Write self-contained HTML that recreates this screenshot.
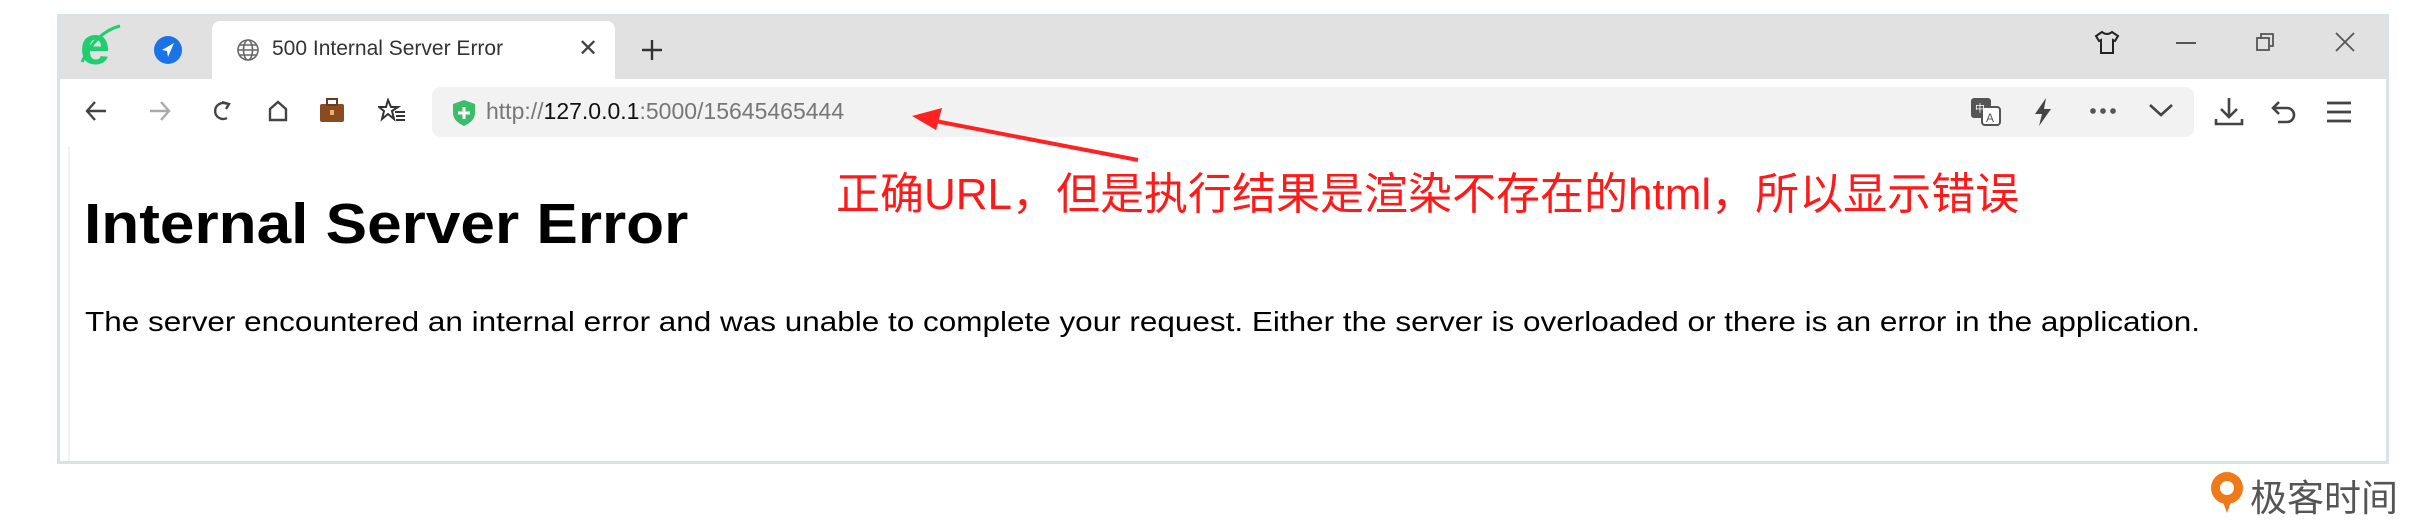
<!DOCTYPE html>
<html><head><meta charset="utf-8"><style>
*{margin:0;padding:0;box-sizing:border-box}
body{width:2428px;height:526px;background:#fff;position:relative;overflow:hidden;font-family:"Liberation Sans","Noto Sans CJK SC",sans-serif}
.abs{position:absolute}
</style></head><body>
<div class="abs" style="left:57px;top:14px;width:2332px;height:450px;border:3px solid #d6e4ea;border-top-width:2px;background:#fff"></div>
<div class="abs" style="left:60px;top:16px;width:2326px;height:63px;background:#e1e1e1"></div>
<div class="abs" style="left:212px;top:21px;width:403px;height:60px;background:#fff;border-radius:8px 8px 0 0"></div>
<div class="abs" style="left:80px;top:20px;font:bold 54px 'Liberation Sans',sans-serif;color:#1fcf6f;line-height:52px">e</div>
<svg class="abs" style="left:76px;top:22px" width="46" height="48"><path d="M6 40 Q20 10 44 4" stroke="#1fcf6f" stroke-width="3" fill="none"/></svg>
<svg class="abs" style="left:153px;top:35px" width="30" height="30"><circle cx="15" cy="15" r="14" fill="#1b73e8"/><path d="M21 8 L9 15 L14 16 L15 22 Z" fill="#fff"/></svg>
<svg class="abs" style="left:236px;top:38px" width="24" height="24" fill="none" stroke="#666" stroke-width="1.6"><circle cx="12" cy="12" r="10"/><ellipse cx="12" cy="12" rx="4.5" ry="10"/><path d="M2 12H22M4 7H20M4 17H20"/></svg>
<div class="abs" style="left:272px;top:37px;font-size:21px;color:#333">500 Internal Server Error</div>
<div class="abs" style="left:578px;top:34px;font-size:24px;color:#444">✕</div>
<svg class="abs" style="left:640px;top:38px" width="24" height="24" stroke="#333" stroke-width="2.4"><path d="M12 2V22M2 12H22"/></svg>
<svg class="abs" style="left:2094px;top:30px" width="26" height="26" fill="none" stroke="#222" stroke-width="2"><path d="M8 2 L2 6 L5 11 L7 10 V23 H19 V10 L21 11 L24 6 L18 2 Q13 6 8 2Z"/></svg>
<div class="abs" style="left:2176px;top:42px;width:20px;height:2px;background:#555"></div>
<svg class="abs" style="left:2255px;top:32px" width="20" height="20" fill="none" stroke="#555" stroke-width="1.8"><rect x="2" y="6" width="12" height="12"/><path d="M6 6V2H18V14H14"/></svg>
<svg class="abs" style="left:2335px;top:32px" width="20" height="20" stroke="#555" stroke-width="1.8"><path d="M1 1L19 19M19 1L1 19"/></svg>
<svg class="abs" style="left:84px;top:98px" width="260" height="26" fill="none" stroke="#444" stroke-width="2.4">
<path d="M22 13H3M11 4L3 13L11 22"/>
<path d="M66 13H85M77 4L85 13L77 22" stroke="#aaa"/>
<path d="M143 6 A8 8 0 1 0 143 20" /><path d="M138 4 L145 6 L142 11" />
<path d="M186 22V11L194 4L202 11V22Z"/>
</svg>
<svg class="abs" style="left:318px;top:96px" width="28" height="28"><rect x="2" y="8" width="24" height="18" rx="2" fill="#8a4a22"/><rect x="9" y="3" width="10" height="6" fill="none" stroke="#6b3a1a" stroke-width="2"/><rect x="12" y="14" width="4" height="5" fill="#e9b36a"/></svg>
<svg class="abs" style="left:378px;top:98px" width="28" height="26" fill="none" stroke="#333" stroke-width="2"><path d="M10 2L13 9L20 9L14 13L16 21L10 16L4 21L6 13L1 9L8 9Z"/><path d="M17 14H27M18 18H27M18 22H27"/></svg>
<div class="abs" style="left:432px;top:87px;width:1762px;height:50px;background:#f2f2f2;border-radius:8px"></div>
<svg class="abs" style="left:452px;top:99px" width="24" height="28"><path d="M12 1 L23 5 V14 Q23 22 12 27 Q1 22 1 14 V5Z" fill="#3dbd6a"/><path d="M12 8V20M6 14H18" stroke="#fff" stroke-width="3"/></svg>
<div class="abs" style="left:486px;top:98px;font-size:23px;color:#777">http://<span style="color:#111">127.0.0.1</span>:5000/15645465444</div>
<svg class="abs" style="left:1970px;top:97px" width="32" height="30"><rect x="1" y="1" width="20" height="20" rx="3" fill="#555"/><rect x="12" y="10" width="18" height="18" rx="3" fill="#fff" stroke="#555" stroke-width="2"/><text x="5" y="15" font-size="10" fill="#fff" font-family="Noto Sans CJK SC">中</text><text x="16" y="25" font-size="12" fill="#555" font-family="Liberation Sans">A</text></svg>
<svg class="abs" style="left:2032px;top:97px" width="22" height="30"><path d="M14 1 L3 17 H10 L7 29 L19 12 H12Z" fill="#444"/></svg>
<div class="abs" style="left:2088px;top:108px;width:30px;height:6px;background:radial-gradient(circle,#555 2.6px,transparent 3px) 0 0/10px 6px"></div>
<svg class="abs" style="left:2148px;top:102px" width="26" height="16" fill="none" stroke="#444" stroke-width="2.6"><path d="M2 3L13 13L24 3"/></svg>
<svg class="abs" style="left:2214px;top:97px" width="30" height="30" fill="none" stroke="#444" stroke-width="2.6"><path d="M15 1V19M7 12L15 20L23 12M2 22V27H28V22"/></svg>
<svg class="abs" style="left:2270px;top:100px" width="28" height="26" fill="none" stroke="#444" stroke-width="2.6"><path d="M9 2L3 8L9 14M3 8H17A7 7 0 0 1 17 22H8"/></svg>
<svg class="abs" style="left:2326px;top:100px" width="26" height="24" stroke="#444" stroke-width="2.8"><path d="M1 3H25M1 12H25M1 21H25"/></svg>
<div class="abs" style="left:68px;top:147px;width:2px;height:314px;background:#eef2f4"></div>
<div class="abs" style="left:84px;top:191px;font-weight:bold;font-size:57px;color:#000;transform:scaleX(1.09);transform-origin:0 0;white-space:nowrap">Internal Server Error</div>
<div class="abs" style="left:85px;top:306px;font-size:28px;color:#000;white-space:nowrap;transform:scaleX(1.124);transform-origin:0 0">The server encountered an internal error and was unable to complete your request. Either the server is overloaded or there is an error in the application.</div>
<div class="abs" style="left:836px;top:158px;font-size:44px;color:#ff1a1a;white-space:nowrap;font-family:'Liberation Sans','Noto Sans CJK SC',sans-serif">正确URL，但是执行结果是渲染不存在的html，所以显示错误</div>
<svg class="abs" style="left:900px;top:100px" width="260" height="70"><path d="M238 60 L30 20" stroke="#f22" stroke-width="4"/><path d="M12 16 L42 8 L36 30Z" fill="#f22"/></svg>
<svg class="abs" style="left:2209px;top:468px" width="36" height="46"><circle cx="18" cy="20" r="16" fill="#ef7a1a"/><circle cx="18" cy="20" r="7" fill="#fff"/><path d="M14 34 L18 45 L22 34Z" fill="#ef7a1a"/></svg>
<div class="abs" style="left:2250px;top:468px;font-size:37px;color:#555;font-family:'Noto Sans CJK SC',sans-serif">极客时间</div>
</body></html>
